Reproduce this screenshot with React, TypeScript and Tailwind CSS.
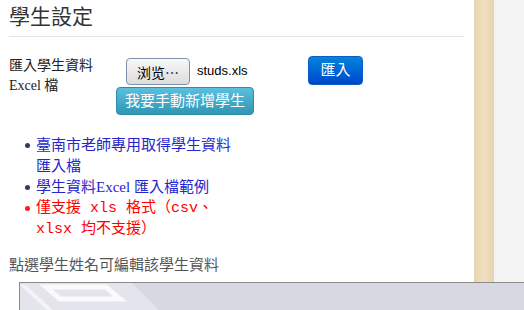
const cjk = { fontFamily: '"Liberation Serif", "Noto Sans CJK TC", serif' };

function Bullet({ color }: { color: string }) {
  return <span className={`mt-[8px] mr-[6px] h-[5px] w-[5px] shrink-0 rounded-full ${color}`} />;
}

export default function App() {
  return (
    <div className="flex h-[310px] w-[524px] flex-col overflow-hidden bg-white" style={cjk}>
      <div className="flex h-[282px]">
        <div className="w-[474px] pl-[9px] pr-[10px]">
          <h1 className="mt-[2px] text-[21px] leading-[30px] text-[#333]">學生設定</h1>
          <div className="mt-[4px] h-px bg-[#e5e5e5]" />

          <div className="mt-[19px] flex items-start">
            <div className="w-[117px] text-[14px] leading-[20px] text-[#222]">
              匯入學生資料
              <br />
              Excel 檔
            </div>
            <div className="flex flex-col">
              <div className="flex items-center">
                <button className="mt-[2px] h-[27px] w-[64px] rounded-[4px] border border-[#7f93ad] bg-gradient-to-b from-[#f8f8f8] to-[#dcdcdc] text-[14px] leading-none text-black" style={{ fontFamily: '"Noto Sans CJK SC", sans-serif' }}>
                  浏览…
                </button>
                <span className="ml-[7px] w-[111px] text-[13px] text-black" style={{ fontFamily: '"Liberation Sans", sans-serif' }}>
                  studs.xls
                </span>
                <button className="h-[29px] w-[55px] rounded-[4px] border border-[#0a5fc4] bg-gradient-to-b from-[#0a84dc] to-[#0044cc] text-[15px] leading-none text-white">
                  匯入
                </button>
              </div>
              <button className="-ml-[10px] mt-[2px] h-[28px] w-[138px] rounded-[4px] border border-[#2d8bac] bg-gradient-to-b from-[#5bc0de] to-[#2f96b4] text-[15px] leading-none text-white">
                我要手動新增學生
              </button>
            </div>
          </div>

          <ul className="mt-[20px] ml-[16px] text-[15px] leading-[21px]">
            <li className="flex text-[#2626cc]">
              <Bullet color="bg-[#2c3e5c]" />
              <span>
                臺南市老師專用取得學生資料
                <br />
                匯入檔
              </span>
            </li>
            <li className="flex text-[#2626cc]">
              <Bullet color="bg-[#2c3e5c]" />
              <span>學生資料Excel 匯入檔範例</span>
            </li>
            <li className="flex text-[#ff0000]">
              <Bullet color="bg-[#ff1a1a]" />
              <span style={{ fontFamily: '"Liberation Mono", "Noto Sans CJK TC", monospace' }}>
                僅支援 xls 格式（csv、
                <br />
                xlsx 均不支援）
              </span>
            </li>
          </ul>

          <p className="mt-[15px] text-[15px] leading-[21px] text-[#555]">點選學生姓名可編輯該學生資料</p>
        </div>
        <div className="w-[20px] bg-gradient-to-r from-[#e9d4ae] via-[#f0dfc0] to-[#e8d3ae]" />
        <div className="flex-1 bg-[#f3f3f3]" />
      </div>

      <div className="relative ml-[19px] flex-1 overflow-hidden border-l border-t border-[#8a8a8a] bg-[#d8d8e2]">
        <svg className="absolute left-0 top-0" width="140" height="28" viewBox="0 0 140 28">
          <polygon points="0,0 112,0 140,28 0,28" fill="#e4e4ec" />
          <polygon points="0,2 6,2 34,28 28,28" fill="#f4f4f8" />
          <polygon points="26,4 86,4 100,16 40,16" fill="none" stroke="#fafafc" strokeWidth="5" />
        </svg>
      </div>
    </div>
  );
}
